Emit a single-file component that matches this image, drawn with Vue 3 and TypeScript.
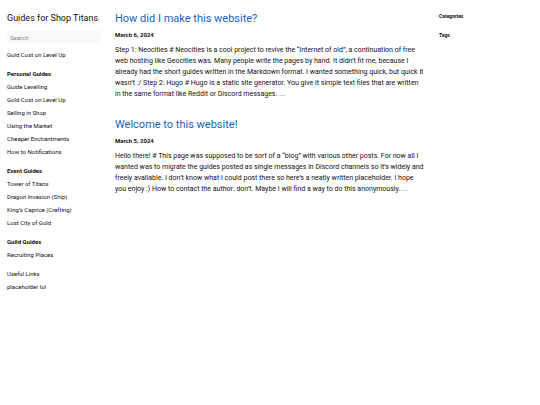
<script setup lang="ts">
interface Post {
  title: string
  date: string
  summary: string
}

interface Group {
  title?: string
  links: string[]
}

const groups: Group[] = [
  { links: ['Gold Cost on Level Up'] },
  {
    title: 'Personal Guides',
    links: [
      'Guide Levelling',
      'Gold Cost on Level Up',
      'Selling in Shop',
      'Using the Market',
      'Cheaper Enchantments',
      'How to Notifications',
    ],
  },
  {
    title: 'Event Guides',
    links: ['Tower of Titans', 'Dragon Invasion (Ship)', 'King’s Caprice (Crafting)', 'Lost City of Gold'],
  },
  { title: 'Guild Guides', links: ['Recruiting Places'] },
  { links: ['Useful Links', 'placeholder lol'] },
]

const posts: Post[] = [
  {
    title: 'How did I make this website?',
    date: 'March 6, 2024',
    summary:
      'Step 1: Neocities # Neocities is a cool project to revive the “Internet of old”, a continuation of free web hosting like Geocities was. Many people write the pages by hand. It didn’t fit me, because I already had the short guides written in the Markdown format. I wanted something quick, but quick it wasn’t :/ Step 2: Hugo # Hugo is a static site generator. You give it simple text files that are written in the same format like Reddit or Discord messages.',
  },
  {
    title: 'Welcome to this website!',
    date: 'March 5, 2024',
    summary:
      'Hello there! # This page was supposed to be sort of a “blog” with various other posts. For now all I wanted was to migrate the guides posted as single messages in Discord channels so it’s widely and freely available. I don’t know what I could post there so here’s a neatly written placeholder. I hope you enjoy :) How to contact the author: don’t. Maybe I will find a way to do this anonymously.',
  },
]
</script>

<template>
  <div class="container">
    <aside class="menu">
      <h2 class="brand"><a href="#">Guides for Shop Titans</a></h2>
      <input class="search" type="text" placeholder="Search" aria-label="Search" />
      <nav class="nav">
        <section v-for="(group, i) in groups" :key="i">
          <h3 v-if="group.title" class="group-title">{{ group.title }}</h3>
          <ul class="links">
            <li v-for="link in group.links" :key="link"><a href="#">{{ link }}</a></li>
          </ul>
        </section>
      </nav>
    </aside>

    <main class="page">
      <article v-for="post in posts" :key="post.title" class="post">
        <h1 class="post-title"><a href="#">{{ post.title }}</a></h1>
        <h5 class="date">{{ post.date }}</h5>
        <p class="summary">{{ post.summary }} <a href="#">...</a></p>
      </article>
    </main>

    <aside class="toc">
      <h4>Categories</h4>
      <h4>Tags</h4>
    </aside>
  </div>
</template>

<style>
body {
  margin: 0;
  background: #fff;
}
</style>

<style scoped>
.container {
  display: grid;
  grid-template-columns: 108px 1fr 108px;
  font-family: Roboto, "Liberation Sans", sans-serif;
  font-size: 7px;
  line-height: 11px;
  color: #111;
}

h1, h2, h3, h4, h5, p, ul {
  margin: 0;
  padding: 0;
}

a {
  color: inherit;
  text-decoration: none;
}

.menu {
  padding: 12px 7px;
  font-size: 6px;
  line-height: 13px;
}

.brand {
  font-size: 9px;
  font-weight: 400;
  white-space: nowrap;
}

.search {
  display: block;
  box-sizing: border-box;
  width: 100%;
  height: 14px;
  margin: 5px 0 4px;
  padding: 0 3px;
  border: 0;
  border-radius: 2px;
  background: #f8f9fa;
  font: inherit;
}

.search::placeholder {
  color: #858585;
}

.nav {
  display: grid;
  gap: 6px;
}

.links {
  list-style: none;
}

.group-title {
  font-size: 6px;
  font-weight: 700;
}

.page {
  padding: 12px 7px;
}

.post {
  margin-bottom: 18px;
}

.post-title {
  font-size: 11px;
  font-weight: 400;
  line-height: 14px;
  color: #1464c0;
}

.date {
  margin: 3px 0 5px;
  font-size: 6px;
  font-weight: 700;
}

.summary a {
  color: #1464c0;
}

.toc {
  display: flex;
  flex-direction: column;
  gap: 8px;
  padding: 11px 7px;
}

.toc h4 {
  font-size: 5px;
  font-weight: 700;
}
</style>
